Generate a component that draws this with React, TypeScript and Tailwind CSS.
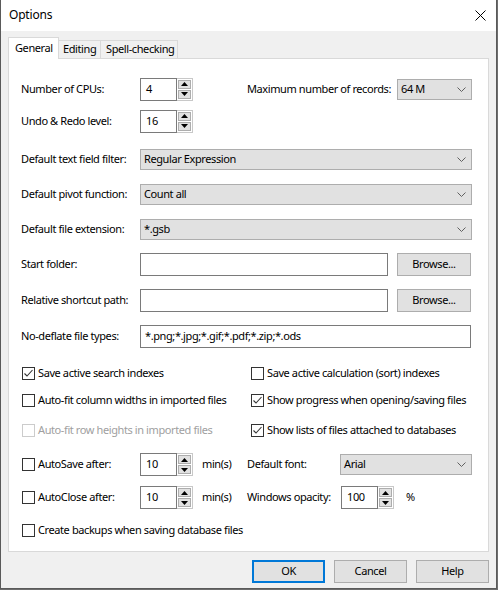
import React from 'react';

const Arrow = ({ up }: { up: boolean }) => (
  <div className="flex-1 flex items-center justify-center bg-[#e1e1e1] border border-[#adadad]">
    <svg width="7" height="4" viewBox="0 0 7 4">
      {up ? <path d="M0 4 L3.5 0 L7 4 Z" fill="#000" /> : <path d="M0 0 L3.5 4 L7 0 Z" fill="#000" />}
    </svg>
  </div>
);

const Spinner = ({ value }: { value: string }) => (
  <div className="flex h-[23px] w-[53px] shrink-0">
    <div className="w-[37px] h-full bg-white border border-[#7a7a7a] pl-[5px] pb-[2px] flex items-center">
      {value}
    </div>
    <div className="w-[16px] h-full flex flex-col border-y border-r border-[#c8c8c8] p-px gap-px">
      <Arrow up />
      <Arrow up={false} />
    </div>
  </div>
);

const Chevron = () => (
  <svg width="9" height="5" viewBox="0 0 9 5" className="shrink-0">
    <path d="M0.5 0.5 L4.5 4.5 L8.5 0.5" fill="none" stroke="#606060" strokeWidth="1" />
  </svg>
);

const Dropdown = ({ value, w }: { value: string; w: string }) => (
  <div className={`${w} h-[21px] shrink-0 bg-[#e1e1e1] border border-[#adadad] flex items-center pl-[3px] pr-[5px]`}>
    <span className="flex-1 pb-[2px]">{value}</span>
    <Chevron />
  </div>
);

const TextBox = ({ value, w }: { value?: string; w: string }) => (
  <div className={`${w} h-[23px] shrink-0 bg-white border border-[#7a7a7a] flex items-center pl-[4px] pb-[2px]`}>{value}</div>
);

const Btn = ({ label, w, focused }: { label: string; w: string; focused?: boolean }) => (
  <div
    className={`${w} h-[23px] shrink-0 bg-[#e1e1e1] flex items-center justify-center pb-[2px] ${
      focused ? 'border-2 border-[#0078d7]' : 'border border-[#adadad]'
    }`}
  >
    {label}
  </div>
);

const Check = ({ label, checked, disabled }: { label: string; checked?: boolean; disabled?: boolean }) => (
  <div className={`flex items-center ${disabled ? 'text-[#a0a0a0]' : 'text-black'}`}>
    <div
      className={`w-[13px] h-[13px] shrink-0 bg-white border ${disabled ? 'border-[#cccccc]' : 'border-[#333333]'} flex items-center justify-center mr-[3px]`}
    >
      {checked && (
        <svg width="11" height="11" viewBox="0 0 11 11">
          <path d="M1.5 5.5 L4 8 L9.5 2" fill="none" stroke="#333" strokeWidth="1.1" />
        </svg>
      )}
    </div>
    <span className="pb-[2px]">{label}</span>
  </div>
);

const Label = ({ text, w }: { text: string; w: string }) => <div className={`${w} shrink-0 pb-[2px]`}>{text}</div>;

export default function App() {
  return (
    <div className="w-[498px] h-[590px] bg-[#6e6e6e] font-['Noto_Sans',sans-serif] text-[11px] tracking-[-0.4px] text-black leading-none whitespace-nowrap">
      <div className="w-[497px] h-[589px] bg-[#f0f0f0] border-l border-r border-b border-[#5a5a5a] flex flex-col">
        {/* title bar */}
        <div className="h-[31px] bg-white flex items-center pl-[8px] pr-[10px] shrink-0">
          <span className="flex-1 text-[12px] tracking-[-0.2px] pb-[2px]">Options</span>
          <svg width="11" height="11" viewBox="0 0 11 11">
            <path d="M0.5 0.5 L10.5 10.5 M10.5 0.5 L0.5 10.5" stroke="#000" strokeWidth="1" />
          </svg>
        </div>

        {/* tabs */}
        <div className="pl-[7px] flex items-end h-[27px] shrink-0">
          <div className="w-[51px] h-[22px] bg-white border-t border-l border-r border-[#d9d9d9] flex items-center pl-[6px] pb-[3px] relative top-px z-10">
            General
          </div>
          <div className="w-[42px] h-[18px] border-t border-r border-[#d9d9d9] flex items-center pl-[4px] pb-[2px]">Editing</div>
          <div className="w-[77px] h-[18px] border-t border-r border-[#d9d9d9] flex items-center pl-[5px] pb-[2px]">Spell-checking</div>
        </div>

        {/* panel */}
        <div className="ml-[7px] w-[481px] h-[494px] bg-white border border-[#d9d9d9] pl-[12px] flex flex-col shrink-0">
          <div className="flex items-center h-[22px] mt-[19px]">
            <div className="w-[226px] flex items-center">
              <Label text="Number of CPUs:" w="w-[119px]" />
              <Spinner value="4" />
            </div>
            <Label text="Maximum number of records:" w="w-[150px]" />
            <Dropdown value="64 M" w="w-[75px]" />
          </div>
          <div className="flex items-center h-[22px] mt-[10px]">
            <Label text="Undo & Redo level:" w="w-[119px]" />
            <Spinner value="16" />
          </div>
          <div className="flex items-center h-[21px] mt-[17px]">
            <Label text="Default text field filter:" w="w-[119px]" />
            <Dropdown value="Regular Expression" w="w-[332px]" />
          </div>
          <div className="flex items-center h-[21px] mt-[14px]">
            <Label text="Default pivot function:" w="w-[119px]" />
            <Dropdown value="Count all" w="w-[332px]" />
          </div>
          <div className="flex items-center h-[21px] mt-[14px]">
            <Label text="Default file extension:" w="w-[119px]" />
            <Dropdown value="*.gsb" w="w-[332px]" />
          </div>
          <div className="flex items-center h-[23px] mt-[13px]">
            <Label text="Start folder:" w="w-[119px]" />
            <TextBox w="w-[248px]" />
            <div className="ml-[9px]">
              <Btn label="Browse..." w="w-[74px]" />
            </div>
          </div>
          <div className="flex items-center h-[23px] mt-[13px]">
            <Label text="Relative shortcut path:" w="w-[119px]" />
            <TextBox w="w-[248px]" />
            <div className="ml-[9px]">
              <Btn label="Browse..." w="w-[74px]" />
            </div>
          </div>
          <div className="flex items-center h-[23px] mt-[13px]">
            <Label text="No-deflate file types:" w="w-[119px]" />
            <TextBox value="*.png;*.jpg;*.gif;*.pdf;*.zip;*.ods" w="w-[331px]" />
          </div>

          <div className="flex items-center h-[20px] mt-[15px] pl-px">
            <div className="w-[229px] shrink-0">
              <Check label="Save active search indexes" checked />
            </div>
            <Check label="Save active calculation (sort) indexes" />
          </div>
          <div className="flex items-center h-[20px] mt-[7px] pl-px">
            <div className="w-[229px] shrink-0">
              <Check label="Auto-fit column widths in imported files" />
            </div>
            <Check label="Show progress when opening/saving files" checked />
          </div>
          <div className="flex items-center h-[20px] mt-[10px] pl-px">
            <div className="w-[229px] shrink-0">
              <Check label="Auto-fit row heights in imported files" disabled />
            </div>
            <Check label="Show lists of files attached to databases" checked />
          </div>

          <div className="flex items-center h-[23px] mt-[13px]">
            <div className="w-[226px] shrink-0 flex items-center">
              <div className="w-[119px] shrink-0 pl-px">
                <Check label="AutoSave after:" />
              </div>
              <Spinner value="10" />
              <span className="ml-[9px] pb-[2px]">min(s)</span>
            </div>
            <Label text="Default font:" w="w-[93px]" />
            <Dropdown value="Arial" w="w-[132px]" />
          </div>
          <div className="flex items-center h-[23px] mt-[10px]">
            <div className="w-[226px] shrink-0 flex items-center">
              <div className="w-[119px] shrink-0 pl-px">
                <Check label="AutoClose after:" />
              </div>
              <Spinner value="10" />
              <span className="ml-[9px] pb-[2px]">min(s)</span>
            </div>
            <Label text="Windows opacity:" w="w-[94px]" />
            <Spinner value="100" />
            <span className="ml-[12px] pb-[2px]">%</span>
          </div>
          <div className="flex items-center h-[20px] mt-[11px] pl-px">
            <Check label="Create backups when saving database files" />
          </div>
        </div>

        {/* buttons */}
        <div className="flex justify-end gap-[9px] pr-[7px] mt-[8px]">
          <Btn label="OK" w="w-[73px]" focused />
          <Btn label="Cancel" w="w-[73px]" />
          <Btn label="Help" w="w-[73px]" />
        </div>
      </div>
    </div>
  );
}
